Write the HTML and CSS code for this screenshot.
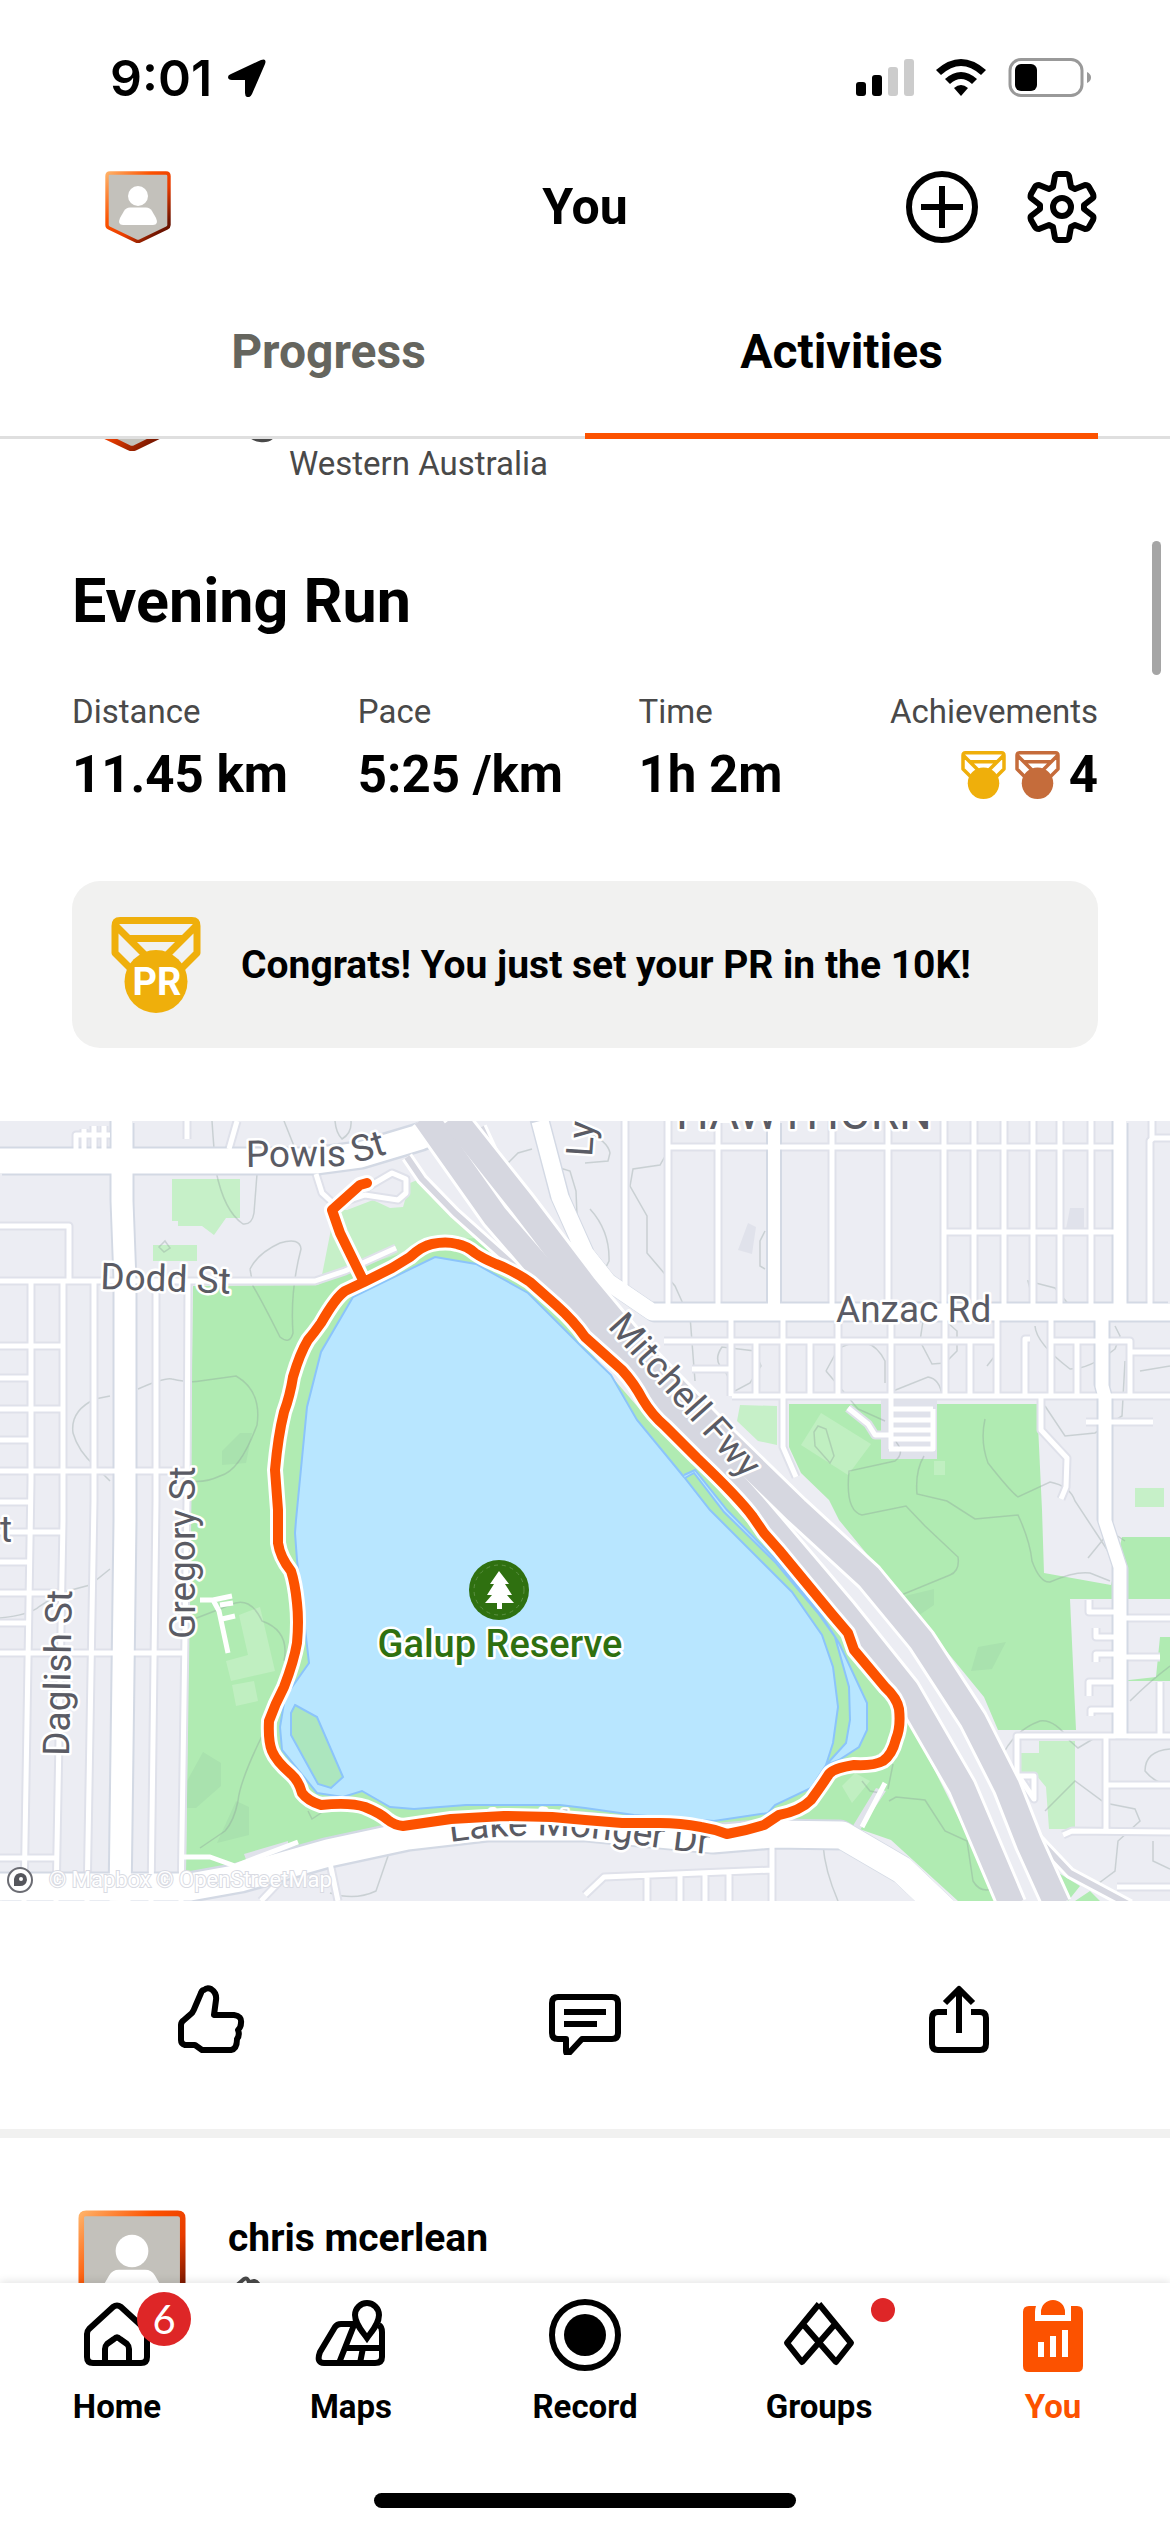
FILE: index.html
```html
<!DOCTYPE html>
<html lang="en">
  <head>
    <meta charset="UTF-8" />
    <meta name="viewport" content="width=device-width, initial-scale=1.0" />
    <title>You - Activities</title>
    <link rel="stylesheet" href="styles.css" />
  </head>
  <body>
    <!-- shared icons -->
    <svg class="sprite" aria-hidden="true">
      <defs>
        <linearGradient id="ring" x1="0" y1="0" x2="1" y2="1">
          <stop offset="0" stop-color="#ffb066" />
          <stop offset="0.35" stop-color="#fc5200" />
          <stop offset="0.6" stop-color="#e83c00" />
          <stop offset="0.85" stop-color="#6e1400" />
          <stop offset="1" stop-color="#5a1000" />
        </linearGradient>
      </defs>
      <symbol id="avatar" viewBox="0 0 66 72">
        <path fill="#c3c1bb" stroke="url(#ring)" stroke-width="3.4" stroke-linejoin="round" d="M5 2H61Q64 2 64 5V54Q64 56 62 57L35 70Q33 71 31 70L4 57Q2 56 2 54V5Q2 2 5 2Z" />
        <circle cx="33" cy="25" r="10" fill="#fff" />
        <path fill="#fff" d="M25 36.500H41Q45 36.500 47 40L51 47Q54 54 48 54H18Q12 54 15 47L19 40Q21 36.500 25 36.500Z" />
      </symbol>
      <symbol id="medal" viewBox="0 0 90 96">
        <path fill="none" stroke="currentColor" stroke-width="7" stroke-linejoin="round" d="M9 3.500H81Q86 3.500 86 9V36L68 54M22 54L4 36V9Q4 3.500 9 3.500M5 9L34 38M85 9L56 38M18 21.500H72" />
        <circle cx="45" cy="64.500" r="31.500" fill="currentColor" />
      </symbol>
      <symbol id="shoe" viewBox="0 0 48 48">
        <path fill="none" stroke="currentColor" stroke-width="4" stroke-linejoin="round" d="M8 14L16 7Q20 5 21 11Q27 6 31 13L44 30Q48 36 44 42Q40 46 32 45Q24 44 20 38L8 20Q6 17 8 14Z" />
      </symbol>
    </svg>

    <header class="header">
      <div class="status">
        <div class="status-left">
          <span class="clock">9:01</span>
          <svg class="location" viewBox="0 0 38 38">
            <path d="M3 15L33 1Q39 -1 37 5L24 35Q22 39 19 38Q17 37 17 34V21H4Q0 21 0 18Q0 16 3 15Z" />
          </svg>
        </div>
        <svg class="status-icons" viewBox="0 0 236 40">
          <rect x="1" y="24" width="10" height="14" rx="3" />
          <rect x="17" y="17" width="10" height="21" rx="3" />
          <rect x="33" y="9" width="10" height="29" rx="3" fill="#ccc" />
          <rect x="49" y="1" width="10" height="37" rx="3" fill="#ccc" />
          <path d="M81 12Q106 -10 131 12L126 17Q106 -1 86 17ZM90 21Q106 7 122 21L117 26Q106 16 95 26ZM99 30Q106 24 113 30L106 38Z" />
          <rect x="155" y="1.500" width="72" height="36" rx="11" fill="none" stroke="#999" stroke-width="3" />
          <rect x="160" y="6" width="22" height="27" rx="6" />
          <path fill="#999" d="M232 14Q236 16 236 19.500Q236 23 232 25Z" />
        </svg>
      </div>

      <div class="topbar">
        <a href="#" aria-label="Profile"><svg class="avatar-small"><use href="#avatar" /></svg></a>
        <h1>You</h1>
        <div class="top-actions">
          <button aria-label="Add">
            <svg class="icon" viewBox="0 0 72 72"><circle cx="36" cy="36" r="33" /><path d="M36 15V57M15 36H57" /></svg>
          </button>
          <button aria-label="Settings">
            <svg class="icon" viewBox="-36 -36 72 72">
              <path d="M-9 -20L-7 -31Q-6 -33 -4 -33H4Q6 -33 7 -31L9 -20L13 -18L23 -22Q26 -22 27 -20L31 -13Q32 -10 31 -9L22 -2V2L31 9Q32 10 31 13L27 20Q26 22 23 22L13 18L9 20L7 31Q6 33 4 33H-4Q-6 33 -7 31L-9 20L-13 18L-23 22Q-26 22 -27 20L-31 13Q-32 10 -31 9L-22 2V-2L-31 -9Q-32 -10 -31 -13L-27 -20Q-26 -22 -23 -22L-13 -18Z" />
              <circle r="9" />
            </svg>
          </button>
        </div>
      </div>

      <nav class="tabs">
        <a href="#">Progress</a>
        <a href="#" class="active">Activities</a>
      </nav>
    </header>

    <main class="feed">
      <div class="scrollbar"></div>

      <article>
        <div class="post-head scrolled">
          <svg class="avatar"><use href="#avatar" /></svg>
          <div class="place">
            <svg class="shoe"><use href="#shoe" /></svg>
            <span>Western Australia</span>
          </div>
        </div>

        <div class="post-body">
          <h2>Evening Run</h2>
          <dl class="stats">
            <div><dt>Distance</dt><dd>11.45 km</dd></div>
            <div><dt>Pace</dt><dd>5:25 /km</dd></div>
            <div><dt>Time</dt><dd>1h 2m</dd></div>
            <div class="achievements">
              <dt>Achievements</dt>
              <dd>
                <svg class="medal gold"><use href="#medal" /></svg>
                <svg class="medal bronze"><use href="#medal" /></svg>
                4
              </dd>
            </div>
          </dl>

          <div class="banner">
            <svg class="gold" viewBox="0 0 90 96">
              <use href="#medal" />
              <text class="pr" x="46" y="78">PR</text>
            </svg>
            <p>Congrats! You just set your PR in the 10K!</p>
          </div>
        </div>

        <svg class="map" viewBox="0 0 1170 780">
          <defs>
            <path id="powisLine" d="M246 46L340 45Q364 42 430 18" />
            <path id="lakeLine" d="M450 721Q540 708 620 721Q680 731 740 736" />
            <g id="minor">
              <path d="M31 160V360L24 780M63 160V400L56 780M94 160V380L87 780M156 160V380L151 780M188 160L187 380L181 780" />
              <path d="M0 105H69V160M0 160H315L345 150L396 127M0 225H63M0 257H31M0 288H63M0 319H31M0 350H188M0 381H31M0 411H62M0 441H28M0 472H62M0 502H27M0 532H183M0 737H56" />
              <path d="M187 0V18M237 0L229 28M76 28V14H110M84 28V8M94 28V5M104 28V5" />
              <path d="M625 0V165M668 0V191M718 0V191M832 0V191M888 0V191M944 0V191M974 0V191M1004 0V191M1033 0V191M1060 0V191M1091 0V191M1150 191V20L1153 17H1170M1152 0V17" />
              <path d="M668 26H1114M946 111H1114" />
              <path d="M664 220H998M1052 220H1130V275M732 275H1170M731 191V275M756 220V275M783 191V326L796 356M810 218V275M838 191V275M891 191V328M945 191V275M970 220V275M997 191V275M1030 218H1025V275M1051 191V275M1077 220V275M692 248H731M1130 231H1170" />
              <path d="M1041 276V309L1067 337L1066 366L1061 378M1086 301H1153" />
              <path d="M848 287L868 303L875 314H889" />
              <path d="M1017 655V615H1170M1017 655H1034V678L1020 657M1106 615V710M1106 664H1170M1063 714L1072 710L1170 711M1117 766H1170M1120 497H1170M1120 536H1160M1160 561V615" />
              <path d="M1089 479V491H1114M1096 507V516H1114M1096 541V533H1114M1089 575V561H1114M1091 595V589H1114" />
              <path d="M772 720V780M585 774L604 756L772 749M647 754V780M680 754V780M705 754V780M729 753V780M330 742L338 780M261 780L280 760" />
              <path d="M316 53L322 72L335 84L365 74L398 79L406 72V58L392 52L368 66" />
            </g>
            <g id="major">
              <path d="M0 40H315L360 34L420 16L450 4" stroke-width="25" />
              <path d="M122 0V80L125 160V400L120 780" stroke-width="21" />
              <path d="M0 766H190L240 757L328 732L407 715L485 706H585L712 718L772 713L842 714L902 749L945 790" stroke-width="27" />
              <path d="M540 0L560 76L585 132L608 161L652 191H1170" stroke-width="17" />
              <path d="M774 0V191" stroke-width="12" />
              <path d="M1120 0V191M1102 191V265L1105 276V400L1120 446V616" stroke-width="13" />
            </g>
            <g id="freeway">
              <path d="M425 -4L495 95L540 147L585 196L640 258L700 325L757 389L842 489L906 569L962 666L1012 784" />
              <path d="M453 -4L522 83L585 166L645 238L715 310L796 389L869 456L921 519L973 599L1007 666L1029 722L1057 784" />
            </g>
          </defs>

          <rect width="1170" height="780" fill="#ecedf3" />
          <g fill="#c6f0c8">
            <path d="M172 58H240V97H226L214 114L202 105H178V100H172ZM153 124H197V140H153Z" />
            <path d="M740 284L777 285V324L758 320L737 300ZM1135 367H1164V386H1135Z" />
            <path d="M1021 632H1039V620H1075V708H1049L1046 666L1036 654H1021Z" />
            <path d="M320 164L335 88L347 89L373 79L390 87L403 86L410 62L422 57L481 117L520 150L440 160L350 165Z" />
          </g>
          <g fill="#b0ebb2">
            <path d="M193 165L317 164L370 142L450 118L481 117L519 146L585 225L650 300L757 400L842 505L905 590L950 680L1000 780H958L891 719L842 702H585L407 707L328 722L239 752L186 753L188 560Z" />
            <path d="M789 283H1037L1042 389L1044 452L1111 464L1122 416H1170V478H1070L1076 609H998L984 576L839 399L829 379L801 352L789 326Z" />
            <path d="M1057 751L1080 765L1068 780ZM1160 516H1170V560H1120L1156 556ZM1075 780L1090 770L1100 780Z" />
          </g>
          <path fill="#c0efc1" d="M821 292L871 323L848 354L801 324ZM934 340H945V354H934ZM239 494L260 486L275 550L231 560L226 540L248 534ZM232 564L254 560L258 580L236 585ZM842 665L855 652L870 660L852 682Z" />
          <path fill="#a9e2ae" d="M203 631L221 642V665L196 687H187V660ZM236 680L249 686V714L217 722ZM978 526L1006 521L992 548L971 550ZM905 475L934 468V484L912 499ZM222 330L240 312H252L246 342L222 344Z" />
          <path fill="#e0e2eb" d="M881 277H937V338H881ZM244 733L288 720V730L248 744ZM876 667L886 670L858 712L851 708ZM1070 87H1084V108H1066ZM748 102L756 106L752 133L738 129Z" />

          <g class="contour">
            <path d="M212 0Q214 30 216 50Q224 90 243 103Q252 104 254 92L257 53M284 0L300 40M335 0Q336 12 342 18Q352 12 351 0" />
            <path d="M250 148Q258 132 280 122Q300 116 301 128Q290 170 293 212Q290 224 280 216Q262 180 253 165L250 148M159 126L165 120L170 127L164 131Z" />
            <path d="M110 275L95 278Q70 290 73 312Q78 330 95 345L110 360M138 268Q165 256 172 258Q190 262 200 260L236 255Q262 270 257 304Q240 350 220 355Q205 362 190 360" />
            <path d="M0 497Q30 494 40 485L60 472L90 464L110 448M194 498Q215 490 230 484Q250 474 262 500Q290 510 284 540M262 615Q240 660 238 680Q234 700 225 710L200 727M308 690L312 698L324 690" />
            <path d="M388 735L376 770Q355 780 330 772M505 45L518 32L532 28M560 47L570 50L576 70L578 120M590 88Q610 110 609 140L605 148M585 10Q608 20 610 32L608 40L585 42" />
            <path d="M668 30L660 44L633 48L630 65L647 95V132L675 165L684 185M690 195L695 260M765 110L760 120V145L765 148M722 226Q712 240 725 250L735 270L750 262L761 245L755 230ZM826 250L838 228Q870 210 885 240V262M826 250L858 288L885 300" />
            <path d="M923 200L940 195L957 210V230L945 242L932 243L920 220ZM888 272L928 256Q940 258 942 275M987 245L994 236M1036 191L1028 160L1055 167L1070 185M1035 205Q1036 222 1070 248Q1090 248 1115 228L1120 215L1115 205" />
            <path d="M814 311L818 305L826 308L834 335L830 342L815 325ZM890 315Q908 330 895 340L849 350Q845 390 862 394L906 385L925 405L958 436Q960 450 950 454L899 475L888 474M924 335Q915 350 917 373L947 380L975 398L1018 394Q1030 420 1032 440Q1040 462 1050 461Q1075 450 1090 452L1110 460" />
            <path d="M985 298Q980 320 988 342Q1010 370 1018 376L1050 361Q1070 365 1075 380L1108 430M1045 285L1065 315L1095 312L1122 295L1125 240M1088 437L1110 410L1125 420" />
            <path d="M1000 640Q1012 610 1040 600Q1055 598 1070 620L1078 627L1098 615M1045 690L1075 660L1105 682L1135 688L1140 700L1118 720L1115 750L1095 765M1170 628Q1145 630 1145 650Q1155 662 1165 662M1153 720V740L1170 748" />
            <path d="M889 680L896 676L925 679L945 710L967 720L973 760Q980 772 992 768M893 643L888 668M823 724Q825 750 838 780M1130 580Q1150 560 1170 545M862 660L870 670L880 672M1170 245L1140 250" />
          </g>

          <g class="lake">
            <path d="M435 136L476 143L528 172L585 229L611 254L637 299L684 356L710 389L757 436L792 471L822 514L833 546L838 586L833 622L826 644L811 667L775 684L768 692L714 700L634 694L585 687L560 684H466L414 688L390 686L362 670L343 676L317 672L282 629L280 606L285 576L309 542L306 516L297 439L295 412L296 399L307 286L321 231L353 176Z" />
            <path d="M684 354L695 349L727 389L779 442L820 492L839 522L867 582V609L859 626L839 639L826 644L846 622L850 599L849 566L835 516L818 492L776 442L724 391L694 352L685 357" />
            <path class="island" d="M295 584L317 596L343 656L331 667L318 663L291 614V592Z" />
          </g>

          <use href="#minor" class="minor-edge" />
          <use href="#major" class="major-edge" />
          <use href="#minor" class="minor" />
          <use href="#major" class="major" />
          <path class="minor" d="M889 288H933M889 299H933M889 309H933M889 318H933M889 328H933V288M182 736H210L235 745L298 721M862 706L885 662M200 479H213L232 475M213 479L219 490L228 532M220 484L233 482M222 498L235 495" />

          <path class="ramp-edge" d="M407 36L422 58L455 92L520 150L570 200M481 6L504 56L552 109L585 146M1036 716L1070 752L1130 784" />
          <path class="ramp" d="M407 36L422 58L455 92L520 150L570 200M481 6L504 56L552 109L585 146M1036 716L1070 752L1130 784" />
          <use href="#freeway" class="freeway-edge" />
          <use href="#freeway" class="freeway" />

          <g class="street">
            <text><textPath href="#powisLine">Powis St</textPath></text>
            <text transform="translate(100 168) rotate(2)">Dodd St</text>
            <text transform="translate(195 518) rotate(-90)">Gregory St</text>
            <text transform="translate(69 635) rotate(-89)">Daglish St</text>
            <text transform="translate(592 36) rotate(-86)">Ly</text>
            <text transform="translate(607 206) rotate(48)">Mitchell Fwy</text>
            <text x="836" y="201">Anzac Rd</text>
            <text x="0" y="421">t</text>
            <text x="804" y="8" class="suburb">HAWTHORN</text>
            <text><textPath href="#lakeLine">Lake Monger Dr</textPath></text>
          </g>

          <g class="route">
            <path id="route" d="M367 62L360 64L332 89L340 112L364 161L392 147L410 136Q422 125 432 123Q446 120 457 123Q467 125 475 132Q482 137 496 143Q514 150 530 161L556 184Q574 200 585 216L622 249Q634 262 643 279Q652 294 665 305L697 337Q740 378 753 396L764 412L779 429L831 492L848 512L854 529L885 566Q897 577 899 588Q901 606 896 618Q892 634 883 640Q874 645 854 644Q834 647 829 653Q822 664 811 679Q800 690 779 694L764 704Q745 710 727 713Q714 708 701 706Q680 702 660 702H622L585 699L552 696L504 695L451 698L403 705Q394 704 388 699Q380 692 365 686Q350 681 321 684Q308 680 302 672Q299 660 291 653Q276 640 272 630Q268 620 269 600Q275 583 284 566Q294 540 297 522Q299 500 297 482Q295 462 291 450Q280 436 278 422L278 389L275 349Q278 315 284 291Q290 275 293 256Q300 232 308 219Q314 212 321 202Q336 176 345 170L364 161" />
            <use href="#route" class="line" />
          </g>

          <circle cx="499" cy="469" r="30" fill="#2f7010" />
          <circle cx="499" cy="469" r="25" fill="none" stroke="#5b8f43" stroke-dasharray="4 4" />
          <path fill="#fff" d="M499 450L509 463H505L512 474H507L514 482H502V488H497V482H485L492 474H487L494 463H490Z" />
          <text class="poi" x="500" y="536">Galup Reserve</text>

          <circle cx="20" cy="759" r="12" fill="#fff" stroke="#6b6c73" stroke-width="2" />
          <path fill="#55565c" d="M14 765V758Q15 752 21 752Q27 753 27 759Q26 765 20 765Z" />
          <circle cx="21" cy="758" r="2" fill="#fff" />
          <text class="attribution" x="49" y="766">© Mapbox © OpenStreetMap</text>
        </svg>

        <div class="actions">
          <button aria-label="Give kudos">
            <svg class="icon" viewBox="0 0 72 72"><path d="M29 7Q32 4 36 6Q42 10 41 17L39 32H59Q67 33 66 40Q66 44 63 47Q65 52 62 56Q62 66 56 67H27L20 62H10Q6 61 6 57V42Q6 39 9 37L17 30Q19 27 20 24L26 10Q27 7 29 7Z" /></svg>
          </button>
          <button aria-label="Comment">
            <svg class="icon" viewBox="0 0 72 72"><path d="M9 14H63Q69 14 69 20V50Q69 56 63 56H33L20 70Q17 72 17 68V56H9Q3 56 3 50V20Q3 14 9 14ZM15 29H57M15 41H48" /></svg>
          </button>
          <button aria-label="Share">
            <svg class="icon" viewBox="0 0 72 72"><path d="M24 29H15Q9 29 9 35V61Q9 67 15 67H57Q63 67 63 61V35Q63 29 57 29H48M36 6V50M22 20L36 6L50 20" /></svg>
          </button>
        </div>
      </article>

      <article class="next">
        <div class="post-head">
          <svg class="avatar"><use href="#avatar" /></svg>
          <div>
            <h3>chris mcerlean</h3>
            <svg class="shoe"><use href="#shoe" /></svg>
          </div>
        </div>
      </article>
    </main>

    <footer class="bottom">
      <nav class="navbar">
        <a href="#">
          <svg class="icon" viewBox="0 0 72 76"><path d="M32 9L8 31Q6 33 6 36V59Q6 65 12 65H60Q66 65 66 59V36Q66 33 64 31L40 9Q36 6 32 9ZM24 65V51Q24 48 26 46L33 41Q36 38 39 41L46 46Q48 48 48 51V65" /></svg>
          <span class="badge">6</span>
          Home
        </a>
        <a href="#">
          <svg class="icon" viewBox="0 0 72 76"><path d="M40 26H26Q22 26 20 29L5 54Q1 65 9 65H60Q67 65 67 59V34Q67 29 64 27M39 27L24 65M31 50H66M48 50L45 65" /><path fill="#fff" d="M52 40C47 33 40 26 40 17A12 12 0 0 1 64 17C64 26 57 33 52 40Z" stroke-linejoin="miter" /></svg>
          Maps
        </a>
        <a href="#">
          <svg class="icon" viewBox="0 0 72 76"><circle cx="36" cy="37" r="33" /><circle cx="36" cy="37" r="21" fill="currentColor" stroke="none" /></svg>
          Record
        </a>
        <a href="#">
          <svg class="icon" viewBox="0 0 72 76"><path d="M36 6L4 45L19 64L53 25M36 6L68 45L53 64L19 25" /></svg>
          <span class="dot"></span>
          Groups
        </a>
        <a href="#" class="active">
          <svg viewBox="0 0 72 76"><path fill="currentColor" fill-rule="evenodd" d="M12 8H19Q18 11 18 14V23H54V8H60Q66 8 66 14V68Q66 74 60 74H12Q6 74 6 68V14Q6 8 12 8ZM21 44V59H27V44ZM33 38V59H39V38ZM45 32V59H51V32ZM24 17V14A12 12 0 0 1 48 14V17Z" /></svg>
          You
        </a>
      </nav>
      <div class="home-indicator"></div>
    </footer>
  </body>
</html>
```

FILE: styles.css
```css
* {
  box-sizing: border-box;
}
body {
  display: flex;
  flex-direction: column;
  height: 100vh;
  margin: 0;
  overflow: hidden;
  background-color: #fff;
  color: #000;
  font-family: Roboto, "Liberation Sans", sans-serif;
}
h1, h2, h3, p, dl, dt, dd {
  margin: 0;
}
svg {
  display: block;
}
a {
  color: inherit;
  text-decoration: none;
}
button {
  padding: 0;
  border: none;
  background: none;
  color: inherit;
  cursor: pointer;
}
.sprite {
  position: absolute;
  width: 0;
  height: 0;
}
.icon {
  width: 72px;
  fill: none;
  stroke: currentColor;
  stroke-width: 6;
  stroke-linejoin: round;
}

/* header */
.header {
  border-bottom: 3px solid #dfdfdf;
}
.status {
  display: flex;
  justify-content: space-between;
  align-items: center;
  padding: 48px 79px 47px 110px;
}
.status-left {
  display: flex;
  align-items: center;
  gap: 16px;
}
.clock {
  font-family: Inter, sans-serif;
  font-size: 50px;
  font-weight: 600;
  line-height: 60px;
}
.location {
  width: 38px;
}
.status-icons {
  width: 236px;
}
.topbar {
  display: grid;
  grid-template-columns: 1fr auto 1fr;
  align-items: center;
  padding: 16px 72px 0 105px;
}
.topbar h1 {
  padding-right: 33px;
  font-size: 50px;
  line-height: 60px;
}
.avatar-small {
  width: 66px;
  height: 72px;
}
.top-actions {
  display: flex;
  justify-content: flex-end;
  gap: 48px;
}
.tabs {
  display: grid;
  grid-template-columns: 1fr 1fr;
  margin: 0 72px -3px;
}
.tabs a {
  padding: 79px 0 51px;
  border-bottom: 6px solid transparent;
  color: #65655e;
  font-size: 48px;
  font-weight: 700;
  line-height: 60px;
  text-align: center;
}
.tabs .active {
  border-color: #fc5200;
  color: #000;
}

/* feed */
.feed {
  position: relative;
  flex: 1;
  min-height: 0;
  overflow: hidden;
}
.scrollbar {
  position: absolute;
  top: 102px;
  right: 9px;
  width: 9px;
  height: 134px;
  border-radius: 5px;
  background-color: #a5a5a5;
}
.post-head {
  display: flex;
  gap: 42px;
  padding: 0 78px;
}
.scrolled {
  margin-top: -106px;
}
.avatar {
  width: 108px;
  height: 118px;
}
.place {
  display: flex;
  gap: 13px;
  padding-top: 62px;
  color: #494949;
  font-size: 33px;
  line-height: 42px;
}
.place span {
  padding-top: 48px;
}
.shoe {
  width: 48px;
  height: 48px;
  color: #494949;
}
.post-body {
  padding: 80px 72px 73px;
}
h2 {
  font-size: 61px;
  line-height: 72px;
}
h3 {
  padding: 4px 0 10px;
  font-size: 39px;
  line-height: 48px;
}
.stats {
  display: grid;
  grid-template-columns: 56fr 55fr 49fr 41fr;
  margin: 55px 0 76px;
}
.stats div {
  min-width: 0;
}
.stats dt {
  margin-bottom: 13px;
  color: #494949;
  font-size: 33px;
  line-height: 40px;
}
.stats dd {
  font-size: 51px;
  font-weight: 700;
  line-height: 60px;
}
.achievements {
  justify-self: end;
}
.achievements dd {
  display: flex;
  justify-content: flex-end;
  align-items: center;
  gap: 9px;
}
.medal {
  width: 45px;
  height: 48px;
}
.gold {
  color: #efaf0b;
}
.bronze {
  color: #c56c3b;
}
.banner {
  display: flex;
  align-items: center;
  gap: 40px;
  padding: 36px 39px 35px;
  border-radius: 28px;
  background-color: #f1f1f0;
}
.banner svg {
  width: 90px;
  height: 96px;
}
.banner p {
  font-size: 39px;
  font-weight: 700;
  line-height: 48px;
}
.pr {
  fill: #fff;
  font-size: 38px;
  font-weight: 700;
  text-anchor: middle;
}

/* map */
.map {
  width: 100%;
}
.contour {
  fill: none;
  stroke: #8a9a98;
  stroke-opacity: 0.35;
  stroke-width: 1.5;
}
.lake {
  fill: #b8e6ff;
  stroke: #8bc4fb;
  stroke-width: 2;
}
.island {
  fill: #ace6be;
}
.minor, .minor-edge, .major, .major-edge, .ramp, .ramp-edge, .freeway, .freeway-edge {
  fill: none;
  stroke: #fff;
  stroke-linejoin: round;
}
.minor {
  stroke-width: 5;
}
.minor-edge {
  stroke: #dfe1ea;
  stroke-width: 9;
}
.major-edge {
  stroke: #d3d9e4;
  filter: drop-shadow(2px 2px 0 #d3d9e4) drop-shadow(-2px -2px 0 #d3d9e4);
}
.ramp-edge {
  stroke-width: 12;
}
.ramp {
  stroke: #d6d7e0;
  stroke-width: 6;
}
.freeway-edge {
  stroke-width: 31;
}
.freeway {
  stroke: #d6d7e0;
  stroke-width: 25;
}
.street {
  fill: #5a5b64;
  stroke: #fff;
  stroke-width: 5;
  stroke-linejoin: round;
  paint-order: stroke;
  font-size: 37px;
}
.suburb {
  font-size: 46px;
  text-anchor: middle;
}
.route {
  fill: none;
  stroke: #fff;
  stroke-width: 16;
  stroke-linecap: round;
  stroke-linejoin: round;
}
.line {
  stroke: #fc5200;
  stroke-width: 10;
}
.poi {
  fill: #2f7010;
  stroke: #fff;
  stroke-width: 5;
  stroke-linejoin: round;
  paint-order: stroke;
  font-size: 38px;
  font-weight: 500;
  text-anchor: middle;
}
.attribution {
  fill: #fff;
  stroke: #d9dbe3;
  stroke-width: 2;
  paint-order: stroke;
  font-size: 22px;
}

.actions {
  display: grid;
  grid-template-columns: repeat(3, 1fr);
  justify-items: center;
  padding: 82px 24px 74px;
}
.next {
  padding-top: 72px;
  border-top: 9px solid #f1f1f0;
}

/* bottom bar */
.bottom {
  position: relative;
  background-color: #fff;
  box-shadow: 0 -2px 8px rgba(0, 0, 0, 0.1);
}
.navbar {
  display: grid;
  grid-template-columns: repeat(5, 1fr);
  padding-top: 15px;
}
.navbar a {
  position: relative;
  display: flex;
  flex-direction: column;
  align-items: center;
  gap: 13px;
  font-size: 33px;
  font-weight: 700;
  line-height: 40px;
}
.navbar svg {
  width: 72px;
  height: 76px;
}
.navbar .active {
  color: #fc5200;
}
.badge {
  position: absolute;
  top: -6px;
  left: calc(50% + 20px);
  width: 54px;
  height: 54px;
  border-radius: 50%;
  background-color: #de2627;
  color: #fff;
  font-family: Lato, sans-serif;
  font-size: 40px;
  font-weight: 400;
  line-height: 54px;
  text-align: center;
}
.dot {
  position: absolute;
  top: 0;
  left: calc(50% + 52px);
  width: 24px;
  height: 24px;
  border-radius: 50%;
  background-color: #de2627;
}
.home-indicator {
  width: 36%;
  height: 15px;
  margin: 66px auto 24px;
  border-radius: 8px;
  background-color: #000;
}
```
